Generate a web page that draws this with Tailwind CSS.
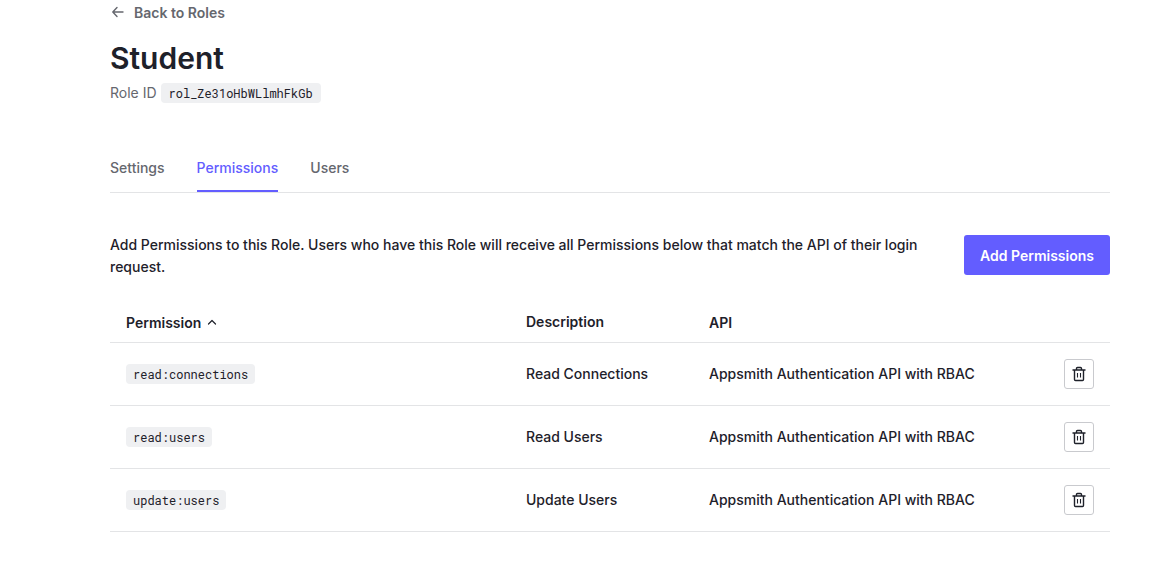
<!DOCTYPE html>
<html lang="en">
<head>
<meta charset="utf-8">
<meta name="viewport" content="width=device-width, initial-scale=1">
<title>Student role</title>
<script src="https://cdn.jsdelivr.net/npm/@tailwindcss/browser@4"></script>
</head>
<body class="bg-white font-['Inter',sans-serif] text-sm text-[#1e212a]">
<svg class="hidden" aria-hidden="true">
  <symbol id="trash" viewBox="0 0 16 16" fill="none" stroke="currentColor" stroke-width="1.4" stroke-linejoin="round">
    <path d="M1.5 4h13M3.500 4v9.500q0 1 1 1h7q1 0 1-1V4M5.500 4V2.500q0-1 1-1h3q1 0 1 1V4"/>
    <path d="M6.5 7v4.500M9.5 7v4.500" stroke-width="1.1"/>
  </symbol>
</svg>
<main class="pr-16 pl-[110px]">
  <a href="#" class="flex h-[26px] items-center gap-2 font-semibold text-[#65676e]">
    <svg class="mb-0.5 size-4" viewBox="0 0 16 16" fill="none" stroke="currentColor" stroke-width="1.4" stroke-linecap="round" stroke-linejoin="round" aria-hidden="true"><path d="M13 8H3M7 3.5 2.8 8 7 12.500"/></svg>
    Back to Roles
  </a>
  <h1 class="mt-3 text-[30px] leading-10 font-semibold">Student</h1>
  <p class="mt-1 flex h-[22px] items-center gap-1 text-[#65676e]">Role ID
    <code class="flex h-5 items-center rounded bg-[#eff0f2] px-2 font-['Roboto_Mono','Liberation_Mono',monospace] text-xs text-[#1e212a]">rol_Ze31oHbWLlmhFkGb</code>
  </p>
  <nav class="mt-10 flex gap-8 border-b border-[#e3e4e6] font-medium text-[#65676e]">
    <a href="#" class="flex h-12 items-center">Settings</a>
    <a href="#" aria-current="page" class="flex h-12 items-center border-b-2 border-[#635dff] pt-0.5 text-[#635dff]">Permissions</a>
    <a href="#" class="flex h-12 items-center">Users</a>
  </nav>
  <div class="mt-[41px] flex items-start gap-8">
    <p class="flex-1 leading-[22px] font-medium">Add Permissions to this Role. Users who have this Role will receive all Permissions below that match the API of their login request.</p>
    <button type="button" class="mt-px h-10 shrink-0 rounded-[3px] bg-[#635dff] px-4 pt-0.5 font-semibold text-white">Add Permissions</button>
  </div>
  <table class="mt-6 w-full table-fixed text-left">
    <colgroup><col class="w-[40%]"><col class="w-[183px]"><col><col class="w-[62px]"></colgroup>
    <thead>
      <tr class="h-10 border-b border-[#e3e4e6]">
        <th scope="col" class="px-4 pt-0.5 font-semibold"><button type="button" class="flex items-center gap-[3px]">Permission
          <svg class="size-4" viewBox="0 0 16 16" fill="none" stroke="currentColor" stroke-width="1.2" stroke-linecap="round" stroke-linejoin="round" aria-hidden="true"><path d="m4.500 9 3.500-3.500 3.500 3.500"/></svg></button></th>
        <th scope="col" class="px-4 font-semibold">Description</th>
        <th scope="col" class="px-4 pt-0.5 font-semibold">API</th>
        <td></td>
      </tr>
    </thead>
    <tbody class="font-medium">
      <tr class="h-[63px] border-b border-[#e3e4e6]">
        <td class="px-4"><code class="flex h-5 w-fit items-center rounded bg-[#eff0f2] px-[7px] font-['Roboto_Mono','Liberation_Mono',monospace] text-xs font-normal">read:connections</code></td>
        <td class="px-4">Read Connections</td>
        <td class="px-4">Appsmith Authentication API with RBAC</td>
        <td class="px-4"><button type="button" aria-label="Remove read:connections" class="flex size-[30px] items-center justify-center rounded-[3px] border border-[#c9cace]"><svg class="size-4" aria-hidden="true"><use href="#trash"/></svg></button></td>
      </tr>
      <tr class="h-[63px] border-b border-[#e3e4e6]">
        <td class="px-4"><code class="flex h-5 w-fit items-center rounded bg-[#eff0f2] px-[7px] font-['Roboto_Mono','Liberation_Mono',monospace] text-xs font-normal">read:users</code></td>
        <td class="px-4">Read Users</td>
        <td class="px-4">Appsmith Authentication API with RBAC</td>
        <td class="px-4"><button type="button" aria-label="Remove read:users" class="flex size-[30px] items-center justify-center rounded-[3px] border border-[#c9cace]"><svg class="size-4" aria-hidden="true"><use href="#trash"/></svg></button></td>
      </tr>
      <tr class="h-[63px] border-b border-[#e3e4e6]">
        <td class="px-4"><code class="flex h-5 w-fit items-center rounded bg-[#eff0f2] px-[7px] font-['Roboto_Mono','Liberation_Mono',monospace] text-xs font-normal">update:users</code></td>
        <td class="px-4">Update Users</td>
        <td class="px-4">Appsmith Authentication API with RBAC</td>
        <td class="px-4"><button type="button" aria-label="Remove update:users" class="flex size-[30px] items-center justify-center rounded-[3px] border border-[#c9cace]"><svg class="size-4" aria-hidden="true"><use href="#trash"/></svg></button></td>
      </tr>
    </tbody>
  </table>
</main>
</body>
</html>
